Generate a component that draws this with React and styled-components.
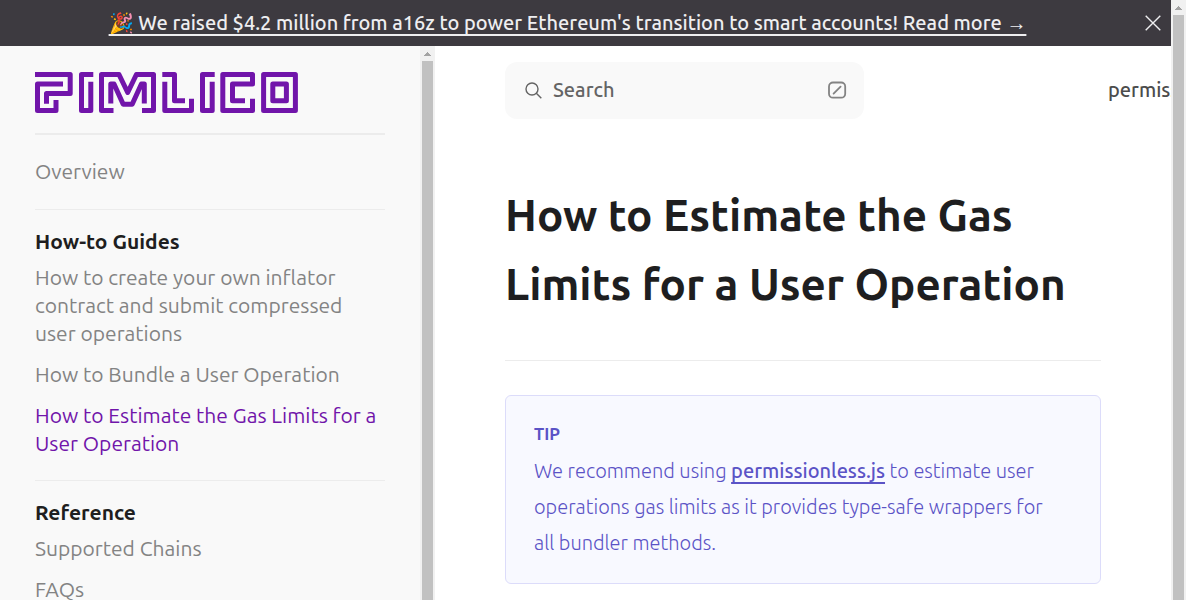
import React from "react";
import styled, { createGlobalStyle, css } from "styled-components";

const Global = createGlobalStyle`
  *, *::before, *::after { box-sizing: border-box; }
  body {
    margin: 0;
    background: #ffffff;
    color: #1e1e20;
    font-family: Ubuntu, "Noto Sans", "Open Sans", sans-serif;
    font-size: 20px;
    font-weight: 500;
    overflow: hidden;
  }
  h1, h2, p, ul { margin: 0; padding: 0; }
`;

const Window = styled.div`
  display: flex;
  height: 100vh;
`;

const Page = styled.div`
  flex: 1;
  min-width: 0;
  display: flex;
  flex-direction: column;
  overflow: hidden;
`;

const ScrollTrack = styled.div`
  flex: none;
  width: 15px;
  padding: 0 2px;
  display: flex;
  flex-direction: column;
  align-items: center;
  background: #f1f1f1;
`;

const ScrollArrow = styled.svg`
  flex: none;
  width: 11px;
  height: 15px;
  fill: #a3a3a3;
`;

const ScrollThumb = styled.div`
  flex: 1;
  width: 11px;
  background: #c1c1c1;
`;

const Banner = styled.div`
  flex: none;
  display: flex;
  align-items: center;
  height: 46px;
  padding-right: 8px;
  background: #3d3a40;
`;

const BannerText = styled.p`
  flex: 1;
  padding-right: 8px;
  text-align: center;
  line-height: 28px;
  white-space: nowrap;
`;

const BannerLink = styled.a`
  color: #eeeef0;
  text-decoration: underline;
  text-decoration-thickness: 2px;
  text-underline-offset: 4px;
`;

const CloseButton = styled.button`
  display: grid;
  place-items: center;
  width: 20px;
  height: 28px;
  padding: 0;
  border: 0;
  background: none;
  color: #eeeef0;
`;

const Body = styled.div`
  flex: 1;
  min-height: 0;
  display: flex;
`;

const SidebarFrame = styled.div`
  flex: none;
  display: flex;
  width: 435px;
`;

const Sidebar = styled.aside`
  flex: 1;
  min-width: 0;
  padding: 26px 35px 0;
  overflow: hidden;
  background: #f9f9f9;
`;

const LogoLink = styled.a`
  display: block;
  height: 63px;
  padding-bottom: 20px;
  border-bottom: 2px solid #ececec;
  svg { display: block; }
`;

const NavSection = styled.section`
  padding: 17px 0 23px;
  &:first-child { padding: 22px 0 24px; }
  & + & { border-top: 1px solid #ececec; }
`;

const NavTitle = styled.h2`
  font-size: 21px;
  font-weight: 600;
  line-height: 28px;
  margin-bottom: 8px;
`;

const NavList = styled.ul`
  list-style: none;
  display: grid;
  gap: 13px;
`;

const NavLink = styled.a`
  display: block;
  color: #838383;
  font-size: 21px;
  font-weight: 400;
  line-height: 28px;
  text-decoration: none;
  ${(p) => p.$active && css`color: #7115aa;`}
`;

const Main = styled.main`
  flex: 1;
  min-width: 0;
  overflow: hidden;
`;

const TopBar = styled.header`
  display: flex;
  align-items: center;
  justify-content: space-between;
  height: 88px;
  padding-left: 70px;
`;

const SearchButton = styled.button`
  display: flex;
  align-items: center;
  gap: 11px;
  width: 359px;
  height: 57px;
  padding: 0 17px 0 20px;
  border: 0;
  border-radius: 12px;
  background: #f9f9f9;
  color: #646464;
  font: inherit;
  line-height: 28px;
  text-align: left;
  svg { flex: none; }
`;

const SearchLabel = styled.span`
  flex: 1;
`;

const TopNav = styled.nav`
  width: 63px;
  overflow: hidden;
  white-space: nowrap;
`;

const TopLink = styled.a`
  color: #4c4c4c;
  line-height: 28px;
  text-decoration: none;
`;

const Article = styled.article`
  padding: 46px 70px 0;
`;

const Title = styled.h1`
  padding-bottom: 42px;
  border-bottom: 1px solid #ececec;
  font-size: 44px;
  font-weight: 600;
  line-height: 69px;
`;

const Tip = styled.aside`
  margin-top: 34px;
  padding: 24px 36px 22px 28px;
  border: 1px solid #dcdcfa;
  border-radius: 6px;
  background: #f8f9ff;
  color: #5b53c6;
`;

const TipTitle = styled.h2`
  font-size: 17px;
  font-weight: 600;
  line-height: 28px;
  margin-bottom: 5px;
`;

const TipText = styled.p`
  font-size: 20px;
  font-weight: 300;
  line-height: 36px;
`;

const TipLink = styled.a`
  color: inherit;
  font-weight: 500;
  text-decoration: underline;
  text-decoration-thickness: 2px;
  text-underline-offset: 4px;
`;

const OVERVIEW = [{ label: "Overview" }];
const GUIDES = [
  { label: "How to create your own inflator contract and submit compressed user operations" },
  { label: "How to Bundle a User Operation" },
  { label: "How to Estimate the Gas Limits for a User Operation", active: true },
];
const REFERENCE = [{ label: "Supported Chains" }, { label: "FAQs" }];

function Scrollbar() {
  return (
    <ScrollTrack aria-hidden="true">
      <ScrollArrow viewBox="0 0 11 15" shapeRendering="crispEdges">
        <path d="M5 6h1v1h1v1h1v1h1v1H2V9h1V8h1V7h1z" />
      </ScrollArrow>
      <ScrollThumb />
    </ScrollTrack>
  );
}

function Logo() {
  return (
    <svg width="263" height="41" viewBox="35 72 263 41" fill="none" stroke="#7115aa" strokeWidth="5" strokeLinejoin="round" role="img" aria-label="Pimlico">
      <path d="M35 74.5H70.2V93.5H46.5V103.7" />
      <path d="M63 84H37.5V110.5H56V100" />
      <path d="M93.3 74.5H81.5V110.5H90.8V81.7" />
      <path d="M113.5 110.5H101.5V74.5H119L127.7 92.5L136.4 74.5H153.5V110.5H142" />
      <path d="M110.8 103.5V84H114L123.2 104.2H132.2L141.4 84H144.3V103.5" />
      <path d="M162.3 74.5H174.5V100.8H185" />
      <path d="M164.8 81.7V110.5H191.5V98.7" />
      <path d="M214.7 74.5H202.5V110.5H212.2V81.7" />
      <path d="M245 100.8H232.5V84H252.5V74.5H222.8V110.5H252.5V98.7" />
      <path d="M263.6 74.5H295.4V110.5H263.6ZM272.8 84H286.4V100.8H272.8Z" />
    </svg>
  );
}

function NavItems({ items }) {
  return (
    <NavList>
      {items.map((item) => (
        <li key={item.label}>
          <NavLink href="#" $active={item.active} aria-current={item.active ? "page" : undefined}>
            {item.label}
          </NavLink>
        </li>
      ))}
    </NavList>
  );
}

export default function App() {
  return (
    <Window>
      <Global />
      <Page>
        <Banner>
          <BannerText>
            <BannerLink href="#">
              🎉 We raised $4.2 million from a16z to power Ethereum's transition to smart accounts! Read more →
            </BannerLink>
          </BannerText>
          <CloseButton aria-label="Close">
            <svg width="16" height="16" viewBox="0 0 16 16" stroke="currentColor" strokeWidth="1.4">
              <path d="M.7.7L15.3 15.3M15.3.7L.7 15.3" />
            </svg>
          </CloseButton>
        </Banner>
        <Body>
          <SidebarFrame>
            <Sidebar>
              <LogoLink href="#"><Logo /></LogoLink>
              <nav aria-label="Documentation">
                <NavSection>
                  <NavItems items={OVERVIEW} />
                </NavSection>
                <NavSection>
                  <NavTitle>How-to Guides</NavTitle>
                  <NavItems items={GUIDES} />
                </NavSection>
                <NavSection>
                  <NavTitle>Reference</NavTitle>
                  <NavItems items={REFERENCE} />
                </NavSection>
              </nav>
            </Sidebar>
            <Scrollbar />
          </SidebarFrame>
          <Main>
            <TopBar>
              <SearchButton>
                <svg width="17" height="17" viewBox="0 0 17 17" fill="none" stroke="currentColor" strokeWidth="1.4">
                  <circle cx="7" cy="7" r="6" />
                  <path d="M11.3 11.3L16.3 16.3" />
                </svg>
                <SearchLabel>Search</SearchLabel>
                <svg width="19" height="19" viewBox="0 0 19 19" fill="none" stroke="#838383" strokeWidth="1.8" strokeLinecap="round">
                  <rect x="1" y="1.5" width="16.2" height="15.2" rx="4" />
                  <path d="M5.6 12.6L12.6 5.6" />
                </svg>
              </SearchButton>
              <TopNav>
                <TopLink href="#">permissionless.js</TopLink>
              </TopNav>
            </TopBar>
            <Article>
              <Title>How to Estimate the Gas Limits for a User Operation</Title>
              <Tip>
                <TipTitle>TIP</TipTitle>
                <TipText>
                  We recommend using <TipLink href="#">permissionless.js</TipLink> to estimate user operations gas
                  limits as it provides type-safe wrappers for all bundler methods.
                </TipText>
              </Tip>
            </Article>
          </Main>
        </Body>
      </Page>
      <Scrollbar />
    </Window>
  );
}
